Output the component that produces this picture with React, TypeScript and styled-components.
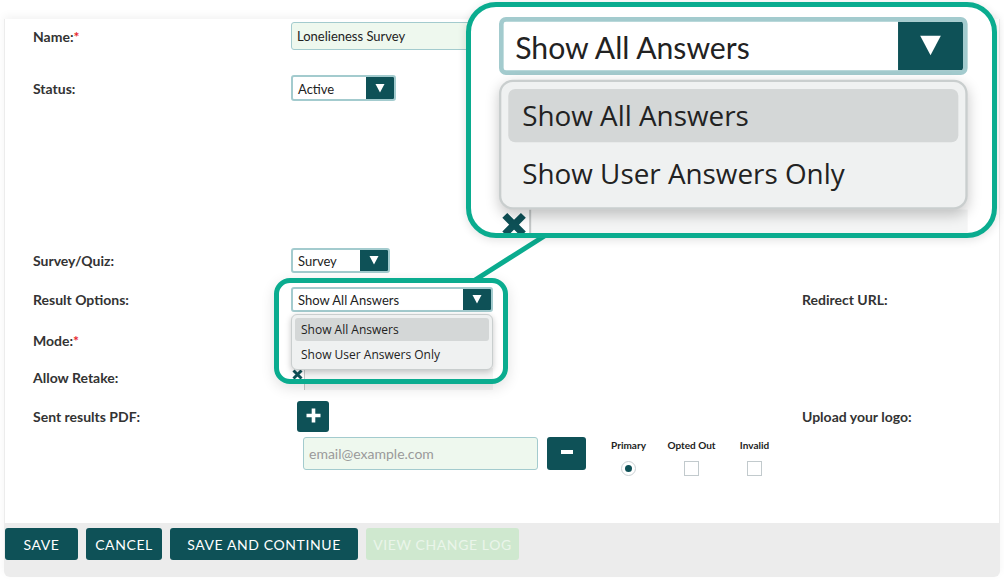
import React from "react";
import styled, { createGlobalStyle } from "styled-components";

// survey settings form, with the "Result Options" dropdown open + a zoom callout

const TEAL = "#0e5157";
const GREEN = "#0aac8f";
const FIELD_BORDER = "#a3cbce";

const GlobalStyle = createGlobalStyle`
  html, body {
    margin: 0;
    padding: 0;
    background: #ffffff;
  }
  body {
    font-family: Lato, "Liberation Sans", Arial, sans-serif;
    color: #333333;
  }
`;

const Page = styled.div`
  position: relative;
  width: 1004px;
  height: 580px;
  overflow: hidden;
  padding-top: 19px;
  box-sizing: border-box;
`;

const Frame = styled.div`
  margin: 0 4px;
  height: 558px;
  padding: 0 1px;
  background: #ececec;
  border-radius: 0 0 6px 6px;
  box-shadow: 0 -3px 8px rgba(0, 0, 0, 0.05);
  display: flex;
  flex-direction: column;
`;

const Panel = styled.div`
  height: 504px;
  padding: 3px 0 0 28px;
  box-sizing: border-box;
  background: #ffffff;
`;

const Row = styled.div<{ $mt: number; $h: number; $top?: boolean }>`
  display: grid;
  grid-template-columns: 258px 511px 1fr;
  align-items: ${(p) => (p.$top ? "start" : "center")};
  margin-top: ${(p) => p.$mt}px;
  height: ${(p) => p.$h}px;
`;

const Label = styled.div`
  font-size: 14px;
  font-weight: 700;
  color: #333333;
`;

const Req = styled.span`
  color: #e8262d;
`;

const TextInput = styled.input<{ $w: number; $h: number; $ml?: number }>`
  width: ${(p) => p.$w}px;
  height: ${(p) => p.$h}px;
  margin-left: ${(p) => p.$ml || 0}px;
  box-sizing: border-box;
  padding: 0 5px;
  background: #eef8ee;
  border: 1.5px solid ${FIELD_BORDER};
  border-radius: 3px;
  font-family: Lato, "Liberation Sans", Arial, sans-serif;
  font-size: 13px;
  color: #222222;
  outline: none;
  &::placeholder {
    color: #9a9a9a;
    font-size: 14px;
  }
`;

const SelectWrap = styled.div`
  position: relative;
`;

const SelectBox = styled.div<{ $w: number; $h: number }>`
  display: flex;
  width: ${(p) => p.$w}px;
  height: ${(p) => p.$h}px;
  box-sizing: border-box;
  border: 2px solid ${FIELD_BORDER};
  border-radius: 3px;
  background: #ffffff;
  overflow: hidden;
`;

const SelectText = styled.span`
  flex: 1;
  display: flex;
  align-items: center;
  padding: 1px 0 0 5px;
  font-size: 13px;
  color: #222222;
`;

const ArrowBtn = styled.span`
  width: 28px;
  background: ${TEAL};
  display: flex;
  align-items: center;
  justify-content: center;
`;

const Menu = styled.div`
  position: absolute;
  top: calc(100% + 2px);
  left: 0;
  width: 202px;
  box-sizing: border-box;
  padding: 3px 3px 2px;
  background: #eff1f1;
  border: 1px solid #c9cece;
  border-radius: 6px;
  box-shadow: 0 2px 6px rgba(0, 0, 0, 0.22);
  font-family: "Open Sans", "DejaVu Sans", sans-serif;
  font-size: 12px;
  color: #222222;
  z-index: 2;
`;

const MenuItem = styled.div<{ $active?: boolean; $h: number }>`
  height: ${(p) => p.$h}px;
  display: flex;
  align-items: center;
  padding-left: 6px;
  border-radius: 3px;
  background: ${(p) => (p.$active ? "#d4d7d7" : "transparent")};
`;

const RetakeField = styled.div`
  display: flex;
  height: 22px;
  margin-top: 2px;
`;

const XBox = styled.div`
  width: 14px;
  border-right: 1px solid #c4c8c8;
  display: flex;
  justify-content: center;
  padding-top: 1px;
  box-sizing: border-box;
`;

const XStrip = styled.div`
  width: 188px;
  background: #f4f5f5;
`;

const IconBtn = styled.div<{ $w: number; $h: number; $ml: number }>`
  width: ${(p) => p.$w}px;
  height: ${(p) => p.$h}px;
  margin-left: ${(p) => p.$ml}px;
  background: ${TEAL};
  border-radius: 3px;
  display: flex;
  align-items: center;
  justify-content: center;
  padding-bottom: 3px;
  box-sizing: border-box;
`;

const EmailLine = styled.div`
  display: flex;
  align-items: flex-start;
`;

const Options = styled.div`
  display: flex;
  margin-left: 11px;
`;

const OptionCol = styled.div`
  width: 63px;
  display: flex;
  flex-direction: column;
  align-items: center;
`;

const OptionLabel = styled.div`
  margin-top: 2px;
  font-size: 10px;
  font-weight: 700;
  line-height: 12px;
  color: #222222;
`;

const Check = styled.div`
  margin-top: 10px;
  width: 15px;
  height: 15px;
  box-sizing: border-box;
  border: 1px solid #c2cacd;
  background: #ffffff;
`;

const Radio = styled.div`
  margin-top: 10px;
  width: 15px;
  height: 15px;
  box-sizing: border-box;
  border: 1px solid #c9d0d3;
  border-radius: 50%;
  display: flex;
  align-items: center;
  justify-content: center;
  &::after {
    content: "";
    width: 7px;
    height: 7px;
    border-radius: 50%;
    background: ${TEAL};
  }
`;

const ButtonBar = styled.div`
  display: flex;
  gap: 8px;
  padding-top: 5px;
`;

const ActionButton = styled.button<{ $w: number; $off?: boolean }>`
  width: ${(p) => p.$w}px;
  height: 32px;
  padding: 0;
  border: none;
  border-radius: 3px;
  background: ${(p) => (p.$off ? "#cfe8cf" : TEAL)};
  color: ${(p) => (p.$off ? "#eaf5ea" : "#ffffff")};
  font-family: Lato, "Liberation Sans", Arial, sans-serif;
  font-size: 14px;
  letter-spacing: 0.6px;
  text-transform: uppercase;
`;

/* ---- callout overlays ---- */

const SmallCallout = styled.div`
  position: absolute;
  left: 274px;
  top: 278px;
  width: 234px;
  height: 106px;
  box-sizing: border-box;
  border: 5px solid ${GREEN};
  border-radius: 16px;
  box-shadow: 0 4px 14px rgba(0, 0, 0, 0.12);
  pointer-events: none;
  z-index: 3;
`;

const BigCallout = styled.div`
  position: absolute;
  left: 466px;
  top: 2px;
  width: 531px;
  height: 236px;
  box-sizing: border-box;
  border: 5px solid ${GREEN};
  border-radius: 30px;
  background: #ffffff;
  overflow: hidden;
  box-shadow: 0 2px 10px rgba(0, 0, 0, 0.12);
  z-index: 4;
`;

const ZoomScene = styled.div`
  position: absolute;
  left: 28px;
  top: 10px;
  width: 202px;
  transform: scale(2.32);
  transform-origin: 0 0;
  display: flex;
  flex-direction: column;
  gap: 56px;
`;

const Connector = styled.svg`
  position: absolute;
  left: 468px;
  top: 228px;
  z-index: 3;
`;

const Triangle = () => (
  <svg width="10" height="9" viewBox="0 0 10 9">
    <polygon points="0.5,0 9.5,0 5,8.5" fill="#ffffff" />
  </svg>
);

const Select = ({ value, w, h }: { value: string; w: number; h: number }) => (
  <SelectBox $w={w} $h={h}>
    <SelectText>{value}</SelectText>
    <ArrowBtn>
      <Triangle />
    </ArrowBtn>
  </SelectBox>
);

const ResultPicker = () => (
  <SelectWrap>
    <Select value="Show All Answers" w={202} h={25} />
    <Menu>
      <MenuItem $active $h={23}>Show All Answers</MenuItem>
      <MenuItem $h={26}>Show User Answers Only</MenuItem>
    </Menu>
  </SelectWrap>
);

const Retake = () => (
  <RetakeField>
    <XBox>
      <svg width="11" height="11" viewBox="0 0 11 11">
        <path d="M1.5 1.5 L9.5 9.5 M9.5 1.5 L1.5 9.5" stroke={TEAL} strokeWidth="3" />
      </svg>
    </XBox>
    <XStrip />
  </RetakeField>
);

export default function App() {
  return (
    <Page>
      <GlobalStyle />
      <Frame>
        <Panel>
          <Row $mt={0} $h={28}>
            <Label>
              Name:<Req>*</Req>
            </Label>
            <TextInput $w={420} $h={28} readOnly value="Lonelieness Survey" />
          </Row>
          <Row $mt={25} $h={26}>
            <Label>Status:</Label>
            <Select value="Active" w={105} h={26} />
          </Row>
          <Row $mt={147} $h={25}>
            <Label>Survey/Quiz:</Label>
            <Select value="Survey" w={99} h={25} />
          </Row>
          <Row $mt={14} $h={25}>
            <Label>Result Options:</Label>
            <ResultPicker />
            <Label>Redirect URL:</Label>
          </Row>
          <Row $mt={16} $h={24}>
            <Label>
              Mode:<Req>*</Req>
            </Label>
          </Row>
          <Row $mt={14} $h={24} $top>
            <Label style={{ marginTop: 3 }}>Allow Retake:</Label>
            <Retake />
          </Row>
          <Row $mt={11} $h={31}>
            <Label>Sent results PDF:</Label>
            <IconBtn $w={32} $h={31} $ml={6}>
              <svg width="15" height="15" viewBox="0 0 15 15">
                <path d="M7.5 0.5 V14.5 M0.5 7.5 H14.5" stroke="#ffffff" strokeWidth="3.6" />
              </svg>
            </IconBtn>
            <Label>Upload your logo:</Label>
          </Row>
          <Row $mt={5} $h={40} $top>
            <div />
            <EmailLine>
              <TextInput $w={235} $h={33} $ml={12} readOnly placeholder="email@example.com" />
              <IconBtn $w={39} $h={33} $ml={9}>
                <svg width="12" height="4" viewBox="0 0 12 4">
                  <rect width="12" height="4" fill="#ffffff" />
                </svg>
              </IconBtn>
              <Options>
                <OptionCol>
                  <OptionLabel>Primary</OptionLabel>
                  <Radio />
                </OptionCol>
                <OptionCol>
                  <OptionLabel>Opted Out</OptionLabel>
                  <Check />
                </OptionCol>
                <OptionCol>
                  <OptionLabel>Invalid</OptionLabel>
                  <Check />
                </OptionCol>
              </Options>
            </EmailLine>
          </Row>
        </Panel>
        <ButtonBar>
          <ActionButton $w={73}>Save</ActionButton>
          <ActionButton $w={76}>Cancel</ActionButton>
          <ActionButton $w={188}>Save and Continue</ActionButton>
          <ActionButton $w={153} $off>
            View Change Log
          </ActionButton>
        </ButtonBar>
      </Frame>

      <Connector width="84" height="56" viewBox="0 0 84 56">
        <line x1="7" y1="52" x2="78" y2="7" stroke={GREEN} strokeWidth="5" strokeLinecap="round" />
      </Connector>
      <SmallCallout />
      <BigCallout>
        <ZoomScene>
          <ResultPicker />
          <Retake />
        </ZoomScene>
      </BigCallout>
    </Page>
  );
}
